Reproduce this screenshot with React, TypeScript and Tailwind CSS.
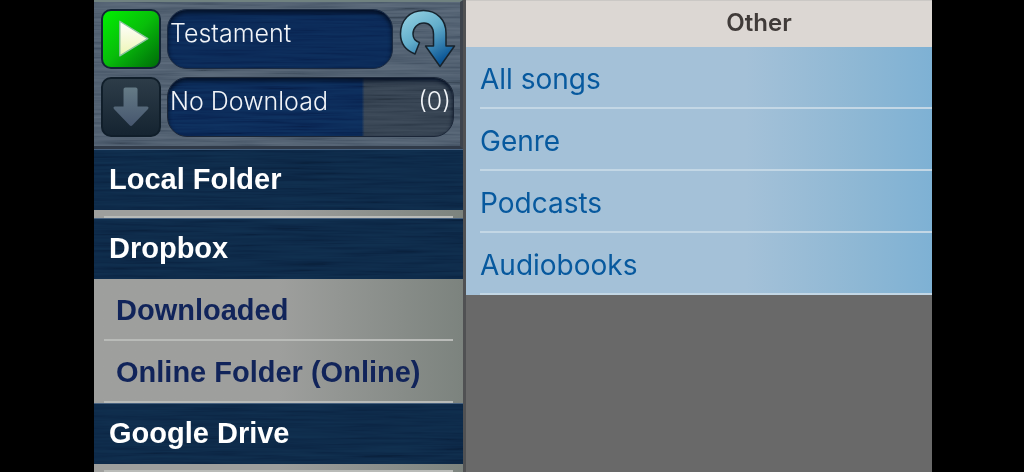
import React, { useState } from "react";

const sections = [
  { title: "Local Folder", items: [] },
  { title: "Dropbox", items: ["Downloaded", "Online Folder (Online)"] },
  { title: "Google Drive", items: [] },
];

const categories = ["All songs", "Genre", "Podcasts", "Audiobooks"];

// brushed metal grain, drawn behind the content of a relative parent
const Grain = ({ seed, className }: any) => (
  <svg className={`absolute inset-0 h-full w-full ${className}`} aria-hidden="true">
    <filter id={`grain-${seed}`} x="0" y="0" width="100%" height="100%">
      <feTurbulence type="fractalNoise" baseFrequency="0.012 0.35" numOctaves="3" seed={seed} />
      <feColorMatrix values="1.6 0 0 0 -0.3  1.6 0 0 0 -0.3  1.6 0 0 0 -0.3  0 0 0 0 1" />
    </filter>
    <rect width="100%" height="100%" filter={`url(#grain-${seed})`} />
  </svg>
);

const PlayIcon = () => (
  <svg viewBox="0 0 60 60" className="h-full w-full" aria-hidden="true">
    <defs>
      <linearGradient id="play" x1="0" y1="0" x2="0" y2="1">
        <stop offset="0" stopColor="#ffffff" />
        <stop offset="1" stopColor="#eef5b4" />
      </linearGradient>
    </defs>
    <path d="M18 11 L48 29.500 L18 48 Z" fill="url(#play)" stroke="#8bc4a0" strokeWidth="1.5" strokeLinejoin="round" />
  </svg>
);

const DownloadIcon = () => (
  <svg viewBox="0 0 60 60" className="h-full w-full" aria-hidden="true">
    <defs>
      <linearGradient id="down" x1="0" y1="0" x2="0" y2="1">
        <stop offset="0" stopColor="#657b86" />
        <stop offset="1" stopColor="#46566e" />
      </linearGradient>
    </defs>
    <path
      d="M24 9 H35 Q37 9 37 11 V29.500 H47 Q50 30 48 32.500 L31.500 49.500 Q30 51 28.500 49.500 L12 32.500 Q10 30 13 29.500 H22 V11 Q22 9 24 9 Z"
      fill="url(#down)"
    />
  </svg>
);

const RepeatIcon = () => (
  <svg viewBox="0 0 58 60" className="h-full w-full" aria-hidden="true">
    <defs>
      <linearGradient id="repeat" x1="0" y1="0" x2="0.6" y2="1">
        <stop offset="0" stopColor="#9ad6e6" />
        <stop offset="0.5" stopColor="#63aecb" />
        <stop offset="1" stopColor="#0a5596" />
      </linearGradient>
    </defs>
    <path
      d="M16 45 C6 41 1.500 33.500 1.500 25 C1.500 11 11 1.500 24.500 1.500 C38 1.500 47 11 47 24 V37 H55.500 L41 57.500 L26.500 37 H34.500 V25 C34.500 18.500 30.500 14 25 14 C18.500 14 14 19 14 25 C14 29.500 16 32 20.500 33.500 Z"
      fill="url(#repeat)"
      stroke="#17232d"
      strokeWidth="1.500"
      strokeLinejoin="round"
    />
  </svg>
);

const SideRow = ({ title, selected, onClick }: any) => (
  <button
    onClick={onClick}
    aria-pressed={selected}
    className="mx-[10px] block h-[62px] border-b-2 border-[#b9bbb8] pt-1 pl-3 text-left text-[29px] font-bold text-[#11245a]"
  >
    {title}
  </button>
);

const SectionHeader = ({ title, seed }: any) => (
  <h2 className="relative flex h-[61px] items-center border-t border-[#47617f] bg-[#0c2746] px-[15px] text-[29px] font-bold text-white">
    <Grain seed={seed} className="opacity-15 mix-blend-soft-light" />
    <span className="relative">{title}</span>
  </h2>
);

const Player = () => {
  const [playing, setPlaying] = useState(false);

  return (
    <header className="relative h-[149px] border-t-2 border-r-3 border-b-3 border-t-[#708280] border-r-[#3d434c] border-b-[#303a48] bg-[#4a596a]">
      <Grain seed={3} className="opacity-30 mix-blend-soft-light" />
      <div className="relative flex flex-col gap-2 pt-[7px] pl-[7px] font-['Inter',sans-serif] text-[25px] text-[#f1f4f8]">
        <div className="flex gap-[6px] pr-[3px]">
          <button
            aria-label="Play"
            aria-pressed={playing}
            onClick={() => setPlaying(!playing)}
            className="size-[60px] shrink-0 rounded-[10px] border-2 border-[#142536] bg-linear-to-br from-[#00f000] via-[#08bd0a] to-[#006c08]"
          >
            <PlayIcon />
          </button>
          <div className="relative min-w-0 flex-1 overflow-hidden rounded-[20px] border border-[#1b2a40] bg-[#0a2755] px-[2px] pt-[7px] leading-8 font-light shadow-[inset_0_3px_4px_#030d20]">
            <Grain seed={5} className="opacity-15 mix-blend-soft-light" />
            <span className="relative">Testament</span>
          </div>
          <button aria-label="Repeat" className="h-[60px] w-[58px] shrink-0">
            <RepeatIcon />
          </button>
        </div>
        <div className="flex gap-[6px] pr-[6px]">
          <button
            aria-label="Download"
            className="size-[60px] shrink-0 rounded-[10px] border-2 border-[#101e2a] bg-linear-to-b from-[#2d3c48] to-[#152431]"
          >
            <DownloadIcon />
          </button>
          <div className="relative flex min-w-0 flex-1 justify-between overflow-hidden rounded-[20px] border border-[#1b2637] bg-linear-to-r from-[#0a2755] from-68% to-[#323f4e] to-69% px-[2px] pt-[7px] leading-8 font-light shadow-[inset_0_3px_4px_#030d20]">
            <Grain seed={8} className="opacity-20 mix-blend-soft-light" />
            <span className="relative">No Download</span>
            <span className="relative">(0)</span>
          </div>
        </div>
      </div>
    </header>
  );
};

export default function App() {
  const [selected, setSelected] = useState("");

  return (
    <div className="min-h-screen bg-black pr-[92px] pl-[94px]">
      <div className="grid min-h-screen grid-cols-[372fr_466fr]">
        <aside className="flex min-w-0 flex-col border-r-3 border-[#505153] bg-linear-to-r from-[#9e9f9d] from-50% to-[#7c837e] font-['Liberation_Sans',Arial,sans-serif]">
          <Player />
          {sections.map((section, i) => (
            <section key={section.title} className="flex flex-col">
              <SectionHeader title={section.title} seed={i + 11} />
              {section.items.map((item) => (
                <SideRow key={item} title={item} selected={selected === item} onClick={() => setSelected(item)} />
              ))}
              {section.items.length === 0 && <div className="mx-[10px] h-2 border-b-2 border-[#b9bbb8]" />}
            </section>
          ))}
        </aside>

        <main className="min-w-0 bg-[#696969] font-['Inter',sans-serif]">
          <h1 className="flex h-12 items-center justify-center border-t border-b border-t-[#cbc8c5] border-b-[#929da4] bg-[#dcd7d3] pb-[2px] pl-[120px] text-2xl font-semibold text-[#403b39]">
            Other
          </h1>
          <ul className="-mt-px bg-linear-to-r from-[#a4c1d8] from-60% via-[#8db7d4] via-85% to-[#7eb1d4]">
            {categories.map((name) => (
              <li key={name} className="pl-[14px]">
                <button className="block h-[62px] w-full border-b-2 border-[#c3d7e5] pt-1 text-left text-[28px] text-[#07599e]">
                  {name}
                </button>
              </li>
            ))}
          </ul>
        </main>
      </div>
    </div>
  );
}
